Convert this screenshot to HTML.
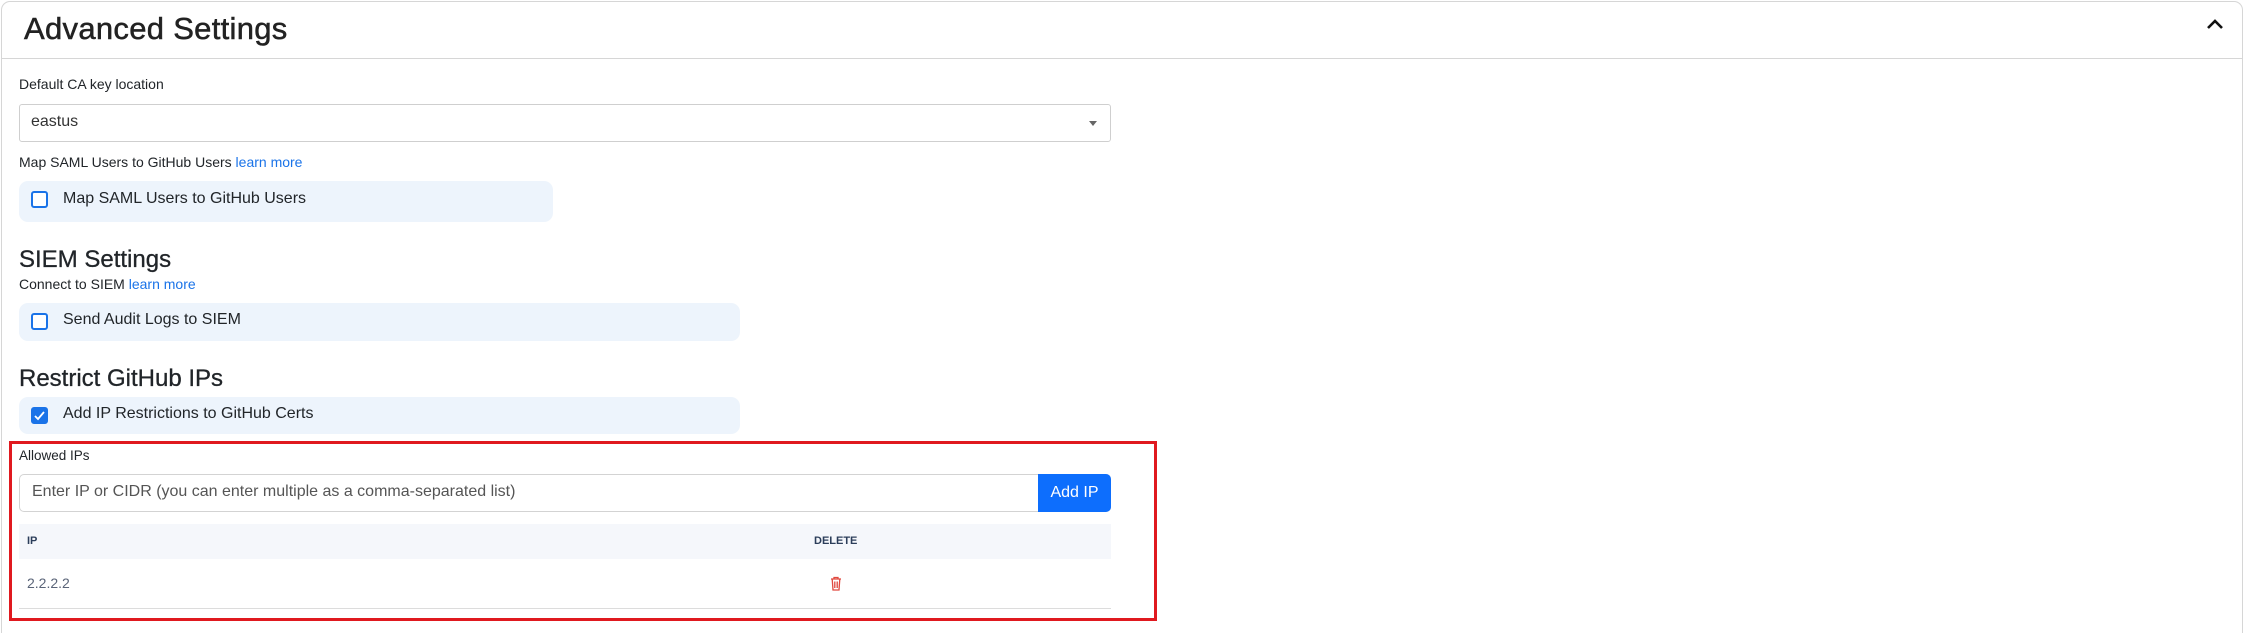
<!DOCTYPE html>
<html><head><meta charset="utf-8"><style>
*{box-sizing:border-box;margin:0;padding:0}
html{height:633px;overflow:hidden}
body{width:2244px;height:633px;background:#fff;font-family:"Liberation Sans",sans-serif;color:#212529;position:relative;overflow:hidden}
.abs{position:absolute}
.card{left:1px;top:1px;width:2242px;height:632px;border:1px solid #d6d6d6;border-bottom:none;border-radius:9px 9px 0 0}
.hdiv{left:1px;top:58px;width:2242px;height:1px;background:#d6d6d6}
.lbl{font-size:14px;color:#212529;white-space:nowrap}
.lnk{color:#1a73e8}
.box{background:#edf4fc;border-radius:9px}
.cb{width:17px;height:17px;border:2px solid #1a73e8;border-radius:3px;background:#fff}
.ct{font-size:16px;white-space:nowrap}
h2{position:absolute;font-weight:normal;font-size:24px;white-space:nowrap;-webkit-text-stroke:0.3px #212529}
</style></head><body>
<div class="abs card"></div>
<div class="abs hdiv"></div>
<div class="abs" style="left:24px;top:11px;font-size:31px;letter-spacing:0.3px;white-space:nowrap;color:#222;-webkit-text-stroke:0.5px #222">Advanced Settings</div>
<svg class="abs" style="left:2204px;top:17px" width="22" height="14" viewBox="0 0 22 14"><path d="M4 11 L11 4 L18 11" fill="none" stroke="#111" stroke-width="2.6"/></svg>

<div class="abs lbl" style="left:19px;top:76px">Default CA key location</div>
<div class="abs" style="left:19px;top:104px;width:1092px;height:38px;border:1px solid #cfcfcf;border-radius:3px"></div>
<div class="abs" style="left:31px;top:113px;font-size:16px;color:#333">eastus</div>
<div class="abs" style="left:1089px;top:121px;width:0;height:0;border-left:4px solid transparent;border-right:4px solid transparent;border-top:5px solid #666"></div>

<div class="abs lbl" style="left:19px;top:154px">Map SAML Users to GitHub Users <span class="lnk">learn more</span></div>
<div class="abs box" style="left:19px;top:181px;width:534px;height:41px"></div>
<div class="abs cb" style="left:31px;top:191px"></div>
<div class="abs ct" style="left:63px;top:190px">Map SAML Users to GitHub Users</div>

<h2 style="left:19px;top:246px">SIEM Settings</h2>
<div class="abs lbl" style="left:19px;top:276px">Connect to SIEM <span class="lnk">learn more</span></div>
<div class="abs box" style="left:19px;top:303px;width:721px;height:38px"></div>
<div class="abs cb" style="left:31px;top:313px"></div>
<div class="abs ct" style="left:63px;top:311px">Send Audit Logs to SIEM</div>

<h2 style="left:19px;top:365px">Restrict GitHub IPs</h2>
<div class="abs box" style="left:19px;top:397px;width:721px;height:37px"></div>
<div class="abs cb" style="left:31px;top:407px;background:#1a73e8"></div>
<svg class="abs" style="left:31px;top:407px" width="17" height="17" viewBox="0 0 17 17"><path d="M4 9 L7 12 L13 5" fill="none" stroke="#fff" stroke-width="1.8"/></svg>
<div class="abs ct" style="left:63px;top:405px">Add IP Restrictions to GitHub Certs</div>

<div class="abs" style="left:9px;top:441px;width:1148px;height:180px;border:3px solid #e0191f"></div>
<div class="abs lbl" style="left:19px;top:448px;font-size:13.5px">Allowed IPs</div>
<div class="abs" style="left:19px;top:474px;width:1092px;height:38px;border:1px solid #d3d3d3;border-radius:5px"></div>
<div class="abs" style="left:32px;top:483px;font-size:16px;color:#555;white-space:nowrap">Enter IP or CIDR (you can enter multiple as a comma-separated list)</div>
<div class="abs" style="left:1038px;top:474px;width:73px;height:38px;background:#0d6efd;border-radius:0 5px 5px 0;color:#fff;font-size:16px;line-height:38px;text-align:center">Add IP</div>

<div class="abs" style="left:19px;top:524px;width:1092px;height:35px;background:#f5f7fb"></div>
<div class="abs" style="left:27px;top:535px;font-size:11px;font-weight:bold;color:#2c3e5a">IP</div>
<div class="abs" style="left:814px;top:535px;font-size:11px;font-weight:bold;color:#2c3e5a">DELETE</div>
<div class="abs" style="left:27px;top:575px;font-size:14px;color:#5a6478">2.2.2.2</div>
<svg class="abs" style="left:829px;top:576px" width="14" height="15" viewBox="0 0 14 15"><path d="M2 3 H12 M5 3 V1.5 H9 V3 M3.2 3 L4 14 H10 L10.8 3 M5.8 5.5 V12 M8.2 5.5 V12" fill="none" stroke="#e0483e" stroke-width="1.3"/></svg>
<div class="abs" style="left:19px;top:608px;width:1092px;height:1px;background:#dcdcdc"></div>
</body></html>
